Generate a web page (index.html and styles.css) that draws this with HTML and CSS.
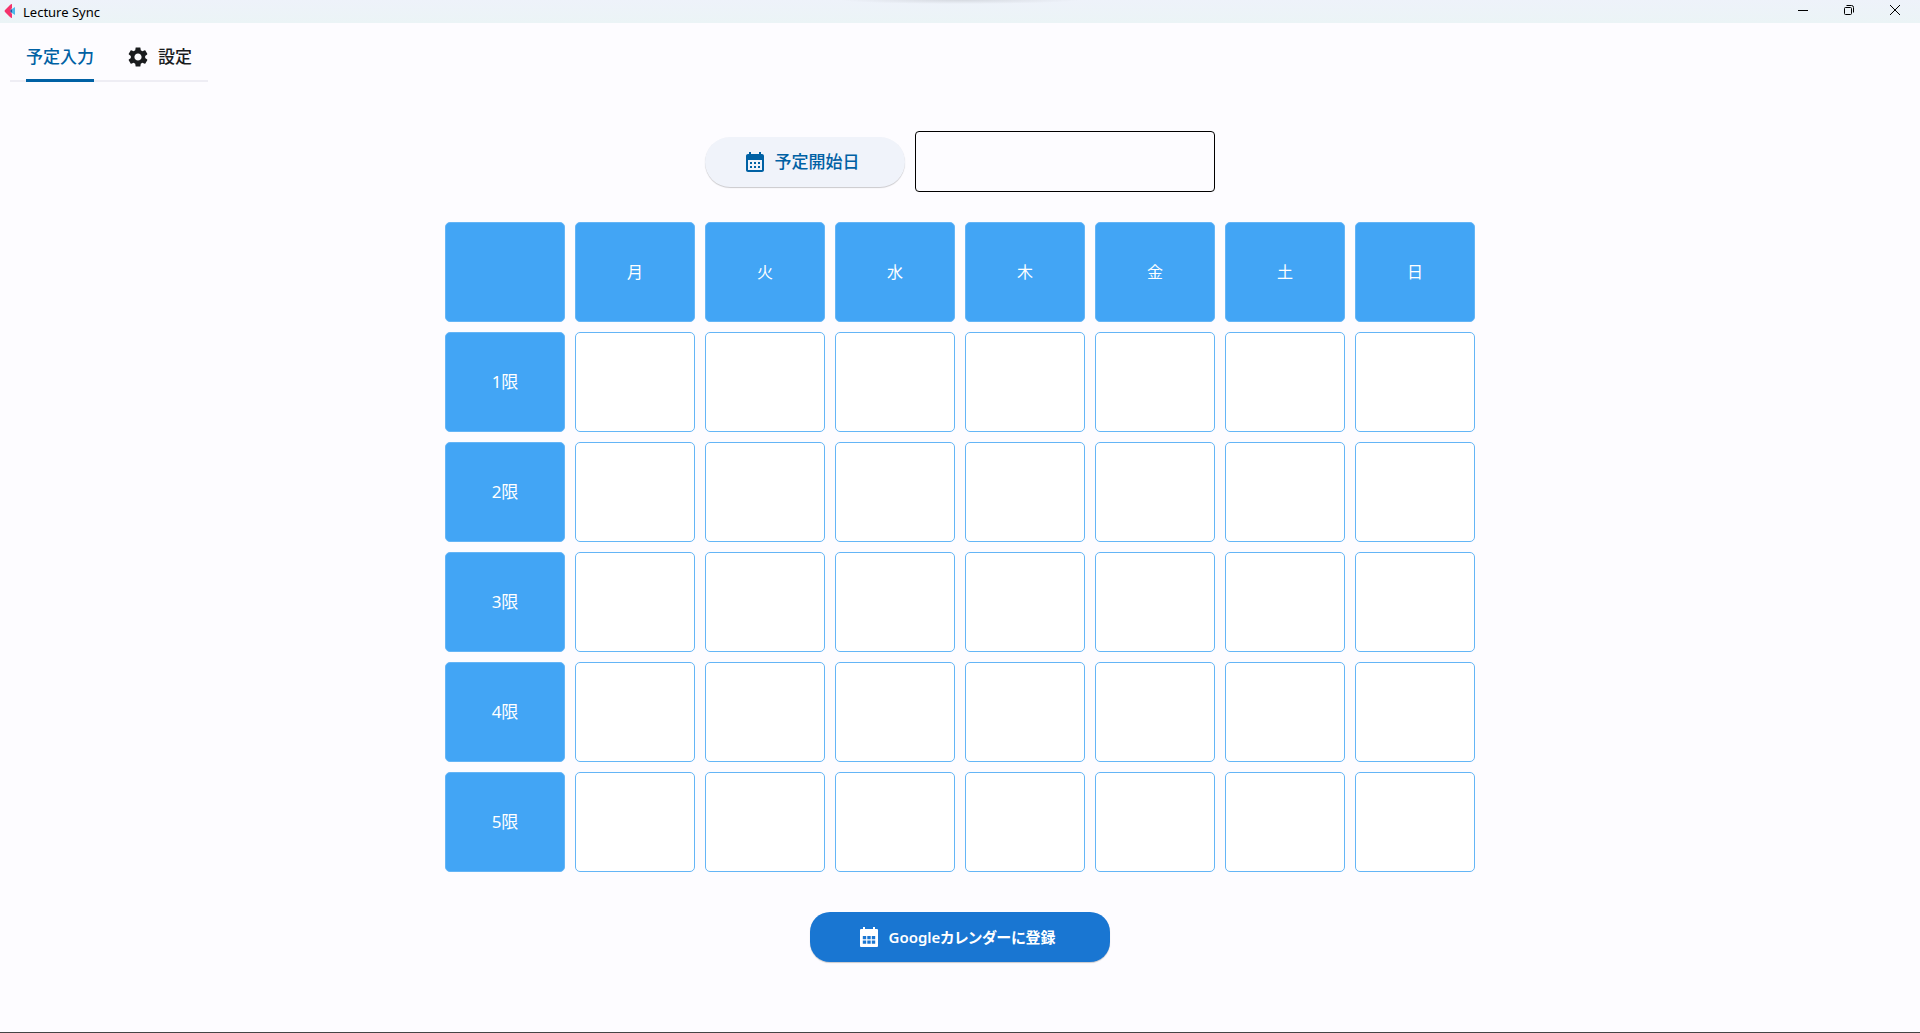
FILE: index.html
```html
<!DOCTYPE html>
<html lang="ja">
<head>
<meta charset="utf-8">
<title>Lecture Sync</title>
<link rel="stylesheet" href="styles.css">
</head>
<body>
<header class="titlebar">
  <svg class="logo" viewBox="0 0 12 16" aria-hidden="true"><path fill="#4db8ea" d="M11 4v8L5 8z"/><path fill="#f4326b" d="M8 1v4L6 8l2 3v4Q7 15 6 14L1 9Q0 8 1 7l5-5q1-1 2-1z"/><path fill="#31509b" d="M8 6v4L6 8z"/></svg>
  <span class="title">Lecture Sync</span>
  <div class="window-controls">
    <button type="button" aria-label="最小化"><svg viewBox="0 0 12 12"><path d="M1 6.500h10"/></svg></button>
    <button type="button" aria-label="元に戻す"><svg viewBox="0 0 12 12"><rect x="1.500" y="3.500" width="7" height="7" rx="1"/><path d="M3.500 1.500h5a2 2 0 0 1 2 2v5"/></svg></button>
    <button type="button" aria-label="閉じる"><svg viewBox="0 0 12 12"><path d="M1 1l10 10M11 1L1 11"/></svg></button>
  </div>
</header>
<nav class="tabs">
  <button type="button" class="tab active">予定入力</button>
  <button type="button" class="tab"><svg class="icon" viewBox="0 0 24 24" aria-hidden="true"><path d="M19.140 12.940c.04-.3.06-.61.06-.94 0-.32-.02-.64-.07-.94l2.030-1.580c.18-.14.23-.41.12-.61l-1.920-3.320c-.12-.22-.37-.29-.59-.22l-2.390.96c-.5-.38-1.030-.7-1.620-.94l-.36-2.540c-.04-.24-.24-.41-.48-.41h-3.840c-.24 0-.43.17-.47.41l-.36 2.540c-.59.24-1.130.57-1.620.94l-2.390-.96c-.22-.08-.47 0-.59.22L2.740 8.870c-.12.21-.08.47.12.61l2.030 1.580c-.05.3-.09.63-.09.94s.02.64.07.94l-2.030 1.580c-.18.14-.23.41-.12.61l1.920 3.320c.12.22.37.29.59.22l2.390-.96c.5.38 1.030.7 1.620.94l.36 2.540c.05.24.24.41.48.41h3.840c.24 0 .44-.17.47-.41l.36-2.540c.59-.24 1.130-.56 1.620-.94l2.390.96c.22.08.47 0 .59-.22l1.920-3.320c.12-.22.07-.47-.12-.61l-2.010-1.580zM12 15.600c-1.980 0-3.600-1.620-3.600-3.600s1.620-3.600 3.600-3.600 3.600 1.620 3.600 3.600-1.620 3.600-3.600 3.600z"/></svg>設定</button>
</nav>
<main class="content">
  <div class="start-date">
    <button type="button" class="btn btn-date"><svg class="icon" viewBox="0 0 24 24" aria-hidden="true"><path d="M19 4h-1V2h-2v2H8V2H6v2H5c-1.110 0-1.990.9-1.990 2L3 20c0 1.100.89 2 2 2h14c1.100 0 2-.9 2-2V6c0-1.100-.9-2-2-2zm0 16H5V10h14v10zM9 14H7v-2h2v2zm4 0h-2v-2h2v2zm4 0h-2v-2h2v2zm-8 4H7v-2h2v2zm4 0h-2v-2h2v2zm4 0h-2v-2h2v2z"/></svg>予定開始日</button>
    <input class="date-field" type="text" aria-label="予定開始日" readonly>
  </div>
  <table class="timetable">
    <thead>
      <tr><td class="corner"></td><th scope="col">月</th><th scope="col">火</th><th scope="col">水</th><th scope="col">木</th><th scope="col">金</th><th scope="col">土</th><th scope="col">日</th></tr>
    </thead>
    <tbody>
      <tr><th scope="row">1限</th><td></td><td></td><td></td><td></td><td></td><td></td><td></td></tr>
      <tr><th scope="row">2限</th><td></td><td></td><td></td><td></td><td></td><td></td><td></td></tr>
      <tr><th scope="row">3限</th><td></td><td></td><td></td><td></td><td></td><td></td><td></td></tr>
      <tr><th scope="row">4限</th><td></td><td></td><td></td><td></td><td></td><td></td><td></td></tr>
      <tr><th scope="row">5限</th><td></td><td></td><td></td><td></td><td></td><td></td><td></td></tr>
    </tbody>
  </table>
  <button type="button" class="btn btn-register"><svg class="icon" viewBox="0 0 24 24" aria-hidden="true"><path fill-rule="evenodd" d="M4 4h2V2h2v2h8V2h2v2h2q1 0 1 1v16q0 1-1 1H4q-1 0-1-1V5q0-1 1-1zM5.800 11v3.300h3.400V11zM10.300 11v3.300h3.400V11zM14.800 11v3.300h3.400V11zM5.800 15.500v3.300h3.400v-3.300zM10.300 15.500v3.300h3.400v-3.300zM14.800 15.500v3.300h3.400v-3.300z"/></svg>Googleカレンダーに登録</button>
</main>
</body>
</html>
```
FILE: styles.css
```css
* {
  box-sizing: border-box;
}

body {
  margin: 0;
  min-height: 100vh;
  display: flex;
  flex-direction: column;
  background: #fdfcff;
  border-bottom: 1px solid #444;
  color: #1a1c1e;
  font: 16px/24px "Noto Sans", "Noto Sans CJK JP", sans-serif;
}

button {
  border: 0;
  padding: 0;
  background: none;
  color: inherit;
  font: inherit;
}

.icon {
  width: 24px;
  height: 24px;
  fill: currentColor;
}

.titlebar {
  display: flex;
  align-items: flex-start;
  height: 23px;
  padding-left: 4px;
  background:
    radial-gradient(closest-side, #0000001a, #00000000) center -4px / 240px 8px no-repeat,
    linear-gradient(#eef2fa, #ebf4f6);
  color: #000;
}

.logo {
  width: 12px;
  height: 16px;
  margin-top: 3px;
}

.title {
  margin-left: 7px;
  font-size: 13px;
}

.window-controls {
  display: flex;
  margin-left: auto;
  padding-right: 2px;
}

.window-controls button {
  display: flex;
  align-items: center;
  justify-content: center;
  width: 46px;
  height: 20px;
}

.window-controls svg {
  width: 12px;
  height: 12px;
  fill: none;
  stroke: #000;
}

.tabs {
  display: flex;
  align-self: flex-start;
  margin: 11px 0 0 10px;
  border-bottom: 2px solid #eeedf4;
}

.tab {
  display: flex;
  align-items: center;
  gap: 8px;
  height: 46px;
  margin: 0 16px;
  font-size: 17px;
  font-weight: 500;
}

.tab.active {
  height: 48px;
  margin-bottom: -2px;
  border-bottom: 3px solid #0061a4;
  color: #0061a4;
}

.content {
  display: flex;
  flex-direction: column;
  align-items: center;
  padding: 49px 0;
}

.start-date {
  display: flex;
  align-items: center;
  gap: 10px;
  margin-bottom: 20px;
}

.btn {
  display: flex;
  align-items: center;
  justify-content: center;
  gap: 8px;
  height: 50px;
  padding: 0 24px 0 16px;
  font-weight: 500;
  box-shadow: 0 1px 1px #00000033;
}

.btn-date {
  width: 200px;
  border-radius: 25px;
  background: #f0f3fa;
  color: #0061a4;
  font-size: 17px;
}

.date-field {
  width: 300px;
  height: 61px;
  padding: 0 12px;
  border: 1px solid #000;
  border-radius: 4px;
  background: transparent;
  font: inherit;
}

.timetable {
  border-spacing: 10px;
  margin-bottom: 30px;
}

.timetable th,
.timetable td {
  width: 120px;
  height: 100px;
  padding: 0;
  border: 1px solid #64b5f6;
  border-radius: 5px;
  background: #fff;
}

.timetable th,
.timetable .corner {
  background: #42a5f5;
  color: #fff;
  font-weight: 400;
}

.timetable tbody th {
  font-size: 17px;
}

.btn-register {
  width: 300px;
  border-radius: 20px;
  background: #1976d2;
  color: #fff;
  font-size: 15px;
  font-weight: 600;
  font-feature-settings: "palt";
}
```
